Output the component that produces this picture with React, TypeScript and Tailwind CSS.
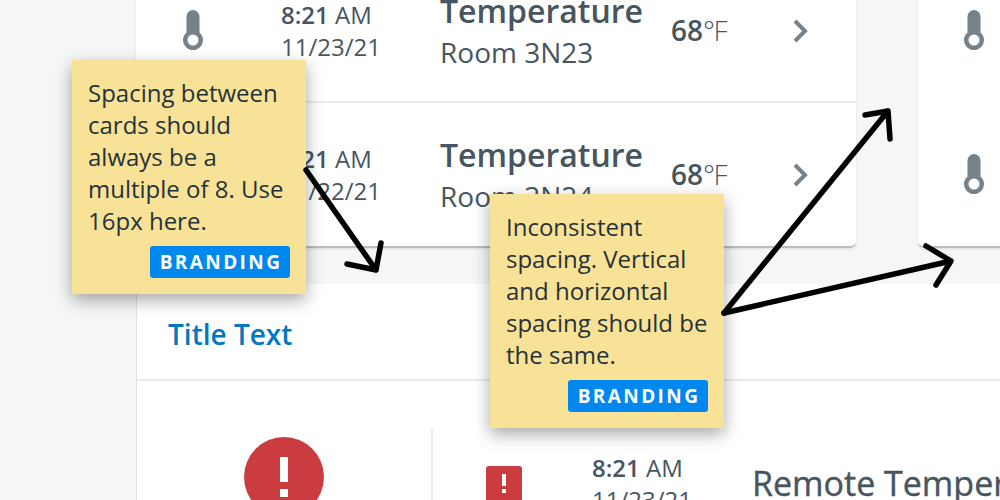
const Thermometer = () => (
  <svg width="22" height="40" viewBox="0 0 22 40" className="shrink-0">
    <path
      d="M4.5 22.4V6.5a6.5 6.5 0 0 1 13 0V22.4a10 10 0 1 1-13 0z"
      fill="#75828a"
    />
    <circle cx="11" cy="30" r="5.5" fill="#fff" />
  </svg>
);

const Chevron = () => (
  <svg width="16" height="24" viewBox="0 0 16 24" className="shrink-0 mt-[2px]">
    <path d="M3 2l10 10-10 10" fill="none" stroke="#75828a" strokeWidth="4" />
  </svg>
);

const Row = ({ date, room }: { date: string; room: string }) => (
  <div className="h-[142px] flex items-center pl-[46px] text-[#47555f]">
    <Thermometer />
    <div className="w-[159px] ml-[77px] text-[24px] leading-[32px] mt-[2px]">
      <div>
        <span className="font-semibold">8:21</span> AM
      </div>
      <div>{date}</div>
    </div>
    <div className="w-[231px] mt-[4px]">
      <div className="text-[32px] leading-[40px] font-semibold">Temperature</div>
      <div className="text-[28px] leading-[42px]">{room}</div>
    </div>
    <div className="w-[121px] text-[28px]">
      <span className="font-semibold">68</span>
      <span className="font-light tracking-[-1.5px]">°F</span>
    </div>
    <Chevron />
  </div>
);

const Note = ({ text, className }: { text: string; className: string }) => (
  <div
    className={`absolute w-[234px] h-[234px] bg-[#f8e297] pt-[17px] px-4 shadow-[0_6px_16px_rgba(0,0,0,0.35)] text-[#263238] ${className}`}
  >
    <p className="text-[24px] leading-[32px]">{text}</p>
    <span className="absolute right-4 bottom-4 h-8 w-[140px] pl-[2px] rounded-[3px] bg-[#0088ee] flex items-center justify-center text-white font-bold text-[19px] tracking-[2.4px]">
      BRANDING
    </span>
  </div>
);

export default function App() {
  return (
    <div className="relative w-[1000px] h-[500px] overflow-hidden bg-[#f5f7f7] font-['Open_Sans',sans-serif]">
      <div className="ml-[136px] flex flex-col">
        <div className="h-[284px] flex gap-[62px] items-start">
          <div className="w-[720px] -mt-[41px] pb-px shrink-0 bg-white rounded-b-[6px] border-b-2 border-b-[#b8bec2] shadow-[0_1px_3px_rgba(0,0,0,0.1)]">
            <Row date="11/23/21" room="Room 3N23" />
            <div className="h-[2px] bg-[#e9ebec]" />
            <Row date="11/22/21" room="Room 3N24" />
          </div>
          <div className="w-[300px] h-[248px] shrink-0 bg-white rounded-bl-[6px] border-b-2 border-b-[#b8bec2] flex flex-col items-start pl-[45px] pt-[10px] gap-[104px] shadow-[0_1px_3px_rgba(0,0,0,0.1)]">
            <Thermometer />
            <Thermometer />
          </div>
        </div>
        <div className="h-[216px] bg-white border-l border-l-[#dfe2e3]">
          <div className="h-[97px] border-b-2 border-b-[#e9ebec] pl-[31px] pt-[31px] text-[28px] leading-[38px] font-semibold text-[#0079c1]">
            Title Text
          </div>
          <div className="flex pt-[48px] text-[#47555f]">
            <div className="w-[296px] h-[100px] shrink-0 border-r-2 border-r-[#e9ebec] flex justify-center">
              <div className="w-20 h-20 mt-[8px] shrink-0 rounded-full bg-[#cb3c40] flex flex-col items-center pt-[20px]">
                <div className="w-2 h-[25px] bg-white" />
                <div className="w-2 h-2 mt-[7px] bg-white" />
              </div>
            </div>
            <div className="w-9 h-9 ml-[53px] mt-[37px] shrink-0 rounded-[3px] bg-[#cb3c40] flex flex-col items-center pt-2">
              <div className="w-1 h-3 bg-white" />
              <div className="w-1 h-1 mt-[3px] bg-white" />
            </div>
            <div className="w-[160px] ml-[70px] mt-[23px] shrink-0 text-[24px] leading-[32px]">
              <div>
                <span className="font-semibold">8:21</span> AM
              </div>
              <div>11/23/21</div>
            </div>
            <div className="mt-[35px] text-[34px] leading-[38px] font-medium [-webkit-text-stroke:0.4px_#47555f] whitespace-nowrap">
              Remote Temperature
            </div>
          </div>
        </div>
      </div>

      <Note
        className="left-[72px] top-[60px]"
        text="Spacing between cards should always be a multiple of 8. Use 16px here."
      />
      <Note
        className="left-[490px] top-[194px]"
        text="Inconsistent spacing. Vertical and horizontal spacing should be the same."
      />

      <svg className="absolute inset-0" width="1000" height="500" viewBox="0 0 1000 500" fill="none">
        <g stroke="#000" strokeWidth="5.5" strokeLinecap="round" strokeLinejoin="round">
          <path d="M306 170L376 270M347 264l29 6 5-27" />
          <path d="M724 313L888 111M865 115l23-4 2 28" />
          <path d="M724 313L951 261M926 246l25 15-15 24" />
        </g>
      </svg>
    </div>
  );
}
